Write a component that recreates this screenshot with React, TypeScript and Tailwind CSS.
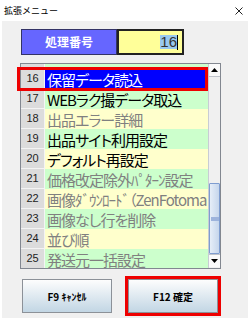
import React from "react";

type Row = {
  no: number;
  label: string;
  bg: string;
  text: string;
};

const rows: Row[] = [
  { no: 15, label: "", bg: "bg-[#ccffcc]", text: "text-[#808080]" },
  { no: 16, label: "保留データ読込", bg: "bg-[#0000ff]", text: "text-white" },
  { no: 17, label: "WEBラク撮データ取込", bg: "bg-[#ccffcc]", text: "text-black" },
  { no: 18, label: "出品エラー詳細", bg: "bg-[#ffffcc]", text: "text-[#808080]" },
  { no: 19, label: "出品サイト利用設定", bg: "bg-[#ccffcc]", text: "text-black" },
  { no: 20, label: "デフォルト再設定", bg: "bg-[#ffffcc]", text: "text-black" },
  { no: 21, label: "価格改定除外ﾊﾟﾀｰﾝ設定", bg: "bg-[#ccffcc]", text: "text-[#808080]" },
  { no: 22, label: "画像ﾀﾞｳﾝﾛｰﾄﾞ（ZenFotoma", bg: "bg-[#ffffcc]", text: "text-[#808080]" },
  { no: 23, label: "画像なし行を削除", bg: "bg-[#ccffcc]", text: "text-[#808080]" },
  { no: 24, label: "並び順", bg: "bg-[#ffffcc]", text: "text-[#808080]" },
  { no: 25, label: "発送元一括設定", bg: "bg-[#ccffcc]", text: "text-[#808080]" },
];

const Arrow = ({ up }: { up?: boolean }) => (
  <svg width="7" height="4" viewBox="0 0 7 4">
    {up ? <polygon points="0,4 7,4 3.5,0" fill="#000" /> : <polygon points="0,0 7,0 3.5,4" fill="#000" />}
  </svg>
);

const App = () => {
  return (
    <div className="w-[250px] h-[321px] bg-white flex flex-col overflow-hidden font-['Noto_Sans_CJK_JP','Noto_Sans',sans-serif]">
      {/* Title bar */}
      <div className="h-[21px] flex items-center justify-between pl-[4px] pr-[7px] shrink-0">
        <span className="text-[9px] leading-none text-black">拡張メニュー</span>
        <svg width="8" height="8" viewBox="0 0 8 8">
          <path d="M0.5 0.5 L7.5 7.5 M7.5 0.5 L0.5 7.5" stroke="#222" strokeWidth="1" />
        </svg>
      </div>

      {/* Body */}
      <div className="flex-1 mx-[2px] mb-[3px] bg-[#f0f0f0] flex flex-col">
        {/* Header */}
        <div className="flex h-[26px] mt-[8px] ml-[19px]">
          <div className="w-[96px] bg-[#6666ff] border border-[#333366] flex items-center justify-center text-white text-[12px] font-bold">
            処理番号
          </div>
          <div className="w-[67px] border-2 border-[#222] bg-[#ffff99] flex items-center justify-end pr-[4px]">
            <span className="bg-[#99c9ef] text-[#333] text-[15px] leading-[14px] font-['Liberation_Sans',sans-serif]">
              16
            </span>
            <span className="w-[1px] h-[15px] bg-black" />
          </div>
        </div>

        {/* List */}
        <div className="relative mt-[8px] ml-[18px] w-[201px] h-[206px] border border-[#828790] bg-white flex">
          <div className="w-[187px] overflow-hidden">
            <div className="-mt-[15px] flex flex-col">
              {rows.map((r) => (
                <div key={r.no} className="flex h-[20px]">
                  <div className="w-[24px] shrink-0 bg-[#dcdcdc] border-b border-r border-[#f4f4f4] flex items-center justify-center text-[11px] text-[#222] font-['Liberation_Sans',sans-serif]">
                    {r.no === 15 ? "" : r.no}
                  </div>
                  <div
                    className={`flex-1 min-w-0 ${r.bg} ${r.text} pl-[2px] flex items-center whitespace-nowrap overflow-hidden text-[15px] leading-none [font-feature-settings:'palt'] tracking-[-1px]`}
                  >
                    {r.label}
                  </div>
                </div>
              ))}
            </div>
          </div>

          {/* Scrollbar */}
          <div className="w-[12px] flex flex-col bg-[#f0f0f0] border-l border-[#c8ccd4]">
            <div className="h-[13px] flex items-center justify-center bg-[#fafafa] border-b border-[#c0c4cc]">
              <Arrow up />
            </div>
            <div className="h-[106px]" />
            <div className="h-[71px] bg-linear-to-r from-[#e6eef8] to-[#c6d6ec] border border-[#7f9dd0] rounded-[1px] flex items-center justify-center">
              <div className="w-[8px] h-[4px] bg-[#9db3dc]" />
            </div>
            <div className="h-[13px] flex items-center justify-center bg-[#fafafa] border-t border-[#c0c4cc]">
              <Arrow />
            </div>
          </div>

          {/* Highlight around current row */}
          <div className="absolute left-[-4px] top-[3px] w-[191px] h-[24px] border-[3px] border-[#ee0000] pointer-events-none" />
        </div>

        {/* Buttons */}
        <div className="flex mt-[10px] ml-[20px] gap-[16px]">
          <button className="w-[90px] h-[34px] border border-[#8c9198] bg-linear-to-b from-[#fdfdfd] to-[#c2d6e4] text-[10px] font-bold text-black">
            F9 ｷｬﾝｾﾙ
          </button>
          <div className="relative">
            <button className="w-[90px] h-[34px] border border-[#8c9198] bg-linear-to-b from-[#fdfdfd] to-[#c2d6e4] text-[10px] font-bold text-black">
              F12 確定
            </button>
            <div className="absolute -inset-[3px] border-[3px] border-[#ee0000] pointer-events-none" />
          </div>
        </div>
      </div>
    </div>
  );
};

export default App;
